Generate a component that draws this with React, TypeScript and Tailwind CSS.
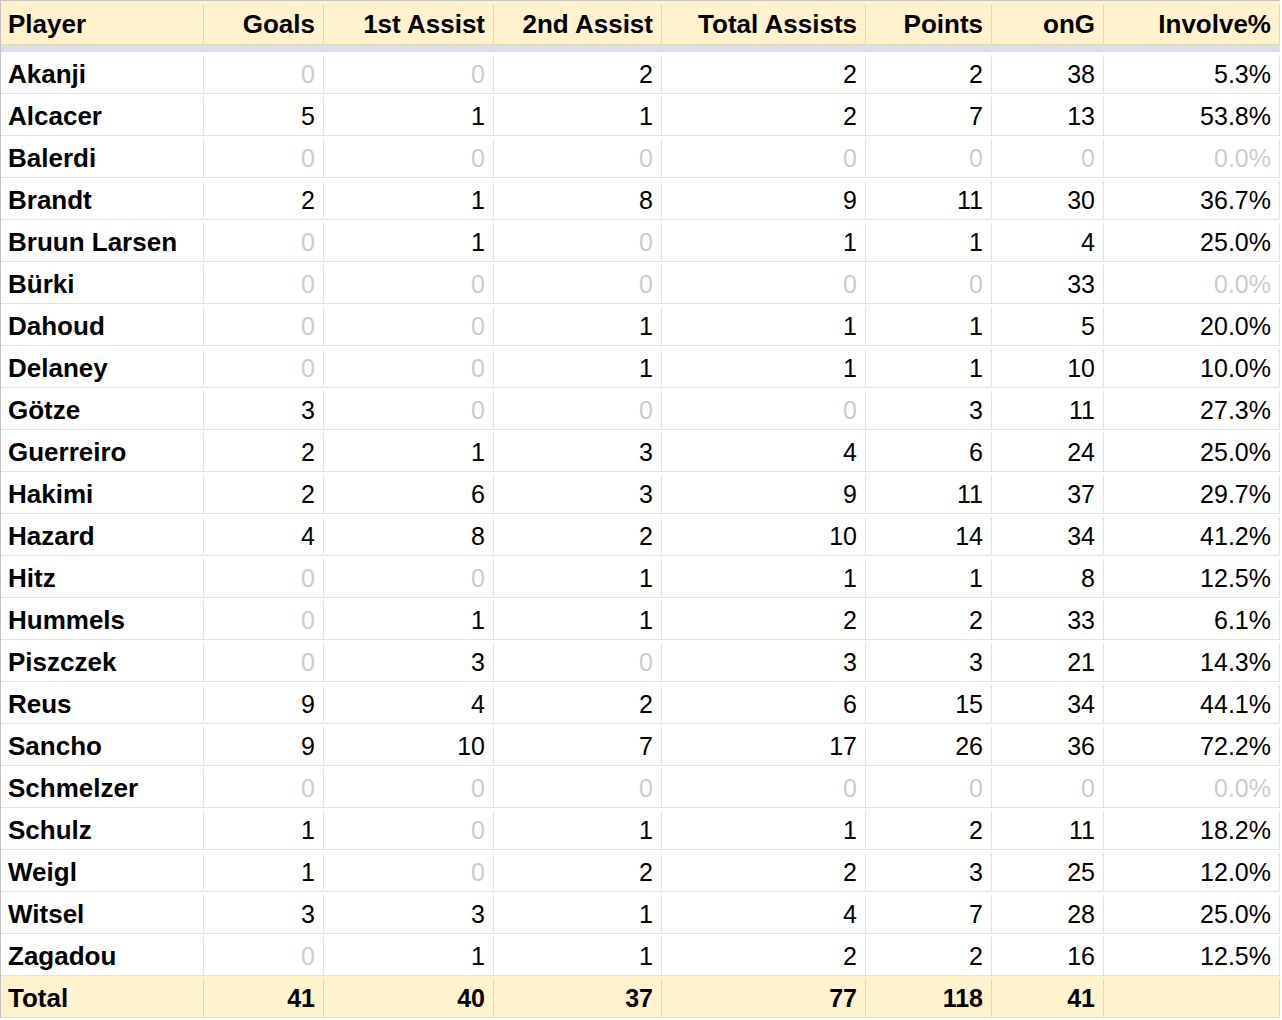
import React from 'react';

type Row = [string, number, number, number, number, number, number, string];

const rows: Row[] = [
  ['Akanji', 0, 0, 2, 2, 2, 38, '5.3%'],
  ['Alcacer', 5, 1, 1, 2, 7, 13, '53.8%'],
  ['Balerdi', 0, 0, 0, 0, 0, 0, '0.0%'],
  ['Brandt', 2, 1, 8, 9, 11, 30, '36.7%'],
  ['Bruun Larsen', 0, 1, 0, 1, 1, 4, '25.0%'],
  ['Bürki', 0, 0, 0, 0, 0, 33, '0.0%'],
  ['Dahoud', 0, 0, 1, 1, 1, 5, '20.0%'],
  ['Delaney', 0, 0, 1, 1, 1, 10, '10.0%'],
  ['Götze', 3, 0, 0, 0, 3, 11, '27.3%'],
  ['Guerreiro', 2, 1, 3, 4, 6, 24, '25.0%'],
  ['Hakimi', 2, 6, 3, 9, 11, 37, '29.7%'],
  ['Hazard', 4, 8, 2, 10, 14, 34, '41.2%'],
  ['Hitz', 0, 0, 1, 1, 1, 8, '12.5%'],
  ['Hummels', 0, 1, 1, 2, 2, 33, '6.1%'],
  ['Piszczek', 0, 3, 0, 3, 3, 21, '14.3%'],
  ['Reus', 9, 4, 2, 6, 15, 34, '44.1%'],
  ['Sancho', 9, 10, 7, 17, 26, 36, '72.2%'],
  ['Schmelzer', 0, 0, 0, 0, 0, 0, '0.0%'],
  ['Schulz', 1, 0, 1, 1, 2, 11, '18.2%'],
  ['Weigl', 1, 0, 2, 2, 3, 25, '12.0%'],
  ['Witsel', 3, 3, 1, 4, 7, 28, '25.0%'],
  ['Zagadou', 0, 1, 1, 2, 2, 16, '12.5%'],
];

const headers = ['Player', 'Goals', '1st Assist', '2nd Assist', 'Total Assists', 'Points', 'onG', 'Involve%'];
const widths = ['w-[203px]', 'w-[120px]', 'w-[170px]', 'w-[168px]', 'w-[204px]', 'w-[126px]', 'w-[112px]', 'w-[176px]'];
const totals = ['Total', '41', '40', '37', '77', '118', '41', ''];

function Cell({ i, children, className = '' }: { i: number; children?: React.ReactNode; className?: string }) {
  return (
    <div
      className={`${widths[i]} shrink-0 h-full flex items-center border-r ${
        i === 0 ? 'justify-start pl-[7px]' : 'justify-end pr-2'
      } ${className}`}
    >
      {children}
    </div>
  );
}

export default function App() {
  return (
    <div
      className="w-[1282px] h-[1020px] bg-white text-black text-[25px] leading-none"
      style={{ fontFamily: '"Liberation Sans", Arial, sans-serif' }}
    >
      <div className="w-[1280px] border-l border-[#c4c4c4]">
        {/* Header */}
        <div className="flex h-[45px] pt-[3px] bg-[#fff2cc] border-t border-t-[#c4c4c4] border-b border-b-[#e8d9ad] font-bold text-[26px]">
          {headers.map((h, i) => (
            <Cell key={h} i={i} className="border-[#e8d9ad]">
              {h}
            </Cell>
          ))}
        </div>

        {/* Frozen row divider */}
        <div className="h-[7px] bg-[#dae0ea]" />

        {/* Rows */}
        {rows.map((r) => (
          <div key={r[0]} className="flex h-[42px] pt-[3px] border-b border-[#e2e2e2]">
            {r.map((v, i) => {
              const zero = i > 0 && (v === 0 || v === '0.0%');
              return (
                <Cell
                  key={i}
                  i={i}
                  className={`border-[#e2e2e2] ${i === 0 ? 'font-bold text-[26px] pb-px' : ''} ${zero ? 'text-[#cccccc]' : ''}`}
                >
                  {v}
                </Cell>
              );
            })}
          </div>
        ))}

        {/* Total */}
        <div className="flex h-[42px] pt-[3px] bg-[#fff2cc] border-b border-[#e8d9ad] font-bold">
          {totals.map((t, i) => (
            <Cell key={i} i={i} className={`border-[#e8d9ad] ${i === 0 ? 'text-[26px] pb-px' : ''}`}>
              {t}
            </Cell>
          ))}
        </div>
      </div>
    </div>
  );
}
